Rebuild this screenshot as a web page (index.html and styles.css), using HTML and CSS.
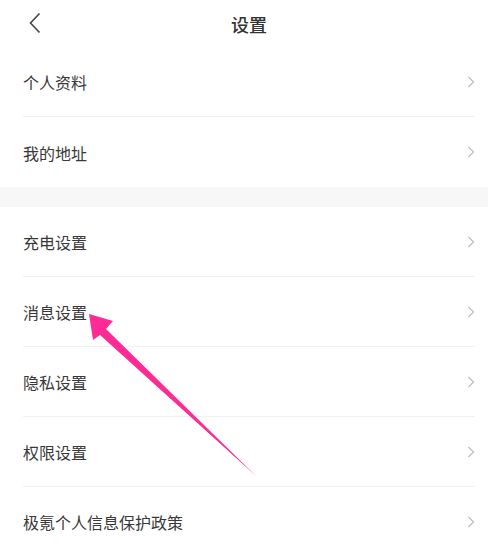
FILE: index.html
```html
<!DOCTYPE html>
<html lang="zh">
<head>
<meta charset="utf-8">
<link rel="stylesheet" href="styles.css">
</head>
<body>
<div class="page">
  <header class="header">
    <svg class="back" width="14" height="22" viewBox="0 0 14 22"><path d="M11.5 1.5 L2.5 11 L11.5 20.5" fill="none" stroke="#444" stroke-width="1.6"/></svg>
    <div class="title">设置</div>
  </header>
  <div class="group">
    <div class="row"><span>个人资料</span><svg class="chev" width="8" height="12" viewBox="0 0 8 12"><path d="M1.5 1 L6.5 6 L1.5 11" fill="none" stroke="#bdbdbd" stroke-width="1.2"/></svg></div>
    <div class="row last"><span>我的地址</span><svg class="chev" width="8" height="12" viewBox="0 0 8 12"><path d="M1.5 1 L6.5 6 L1.5 11" fill="none" stroke="#bdbdbd" stroke-width="1.2"/></svg></div>
  </div>
  <div class="gap"></div>
  <div class="group">
    <div class="row"><span>充电设置</span><svg class="chev" width="8" height="12" viewBox="0 0 8 12"><path d="M1.5 1 L6.5 6 L1.5 11" fill="none" stroke="#bdbdbd" stroke-width="1.2"/></svg></div>
    <div class="row"><span>消息设置</span><svg class="chev" width="8" height="12" viewBox="0 0 8 12"><path d="M1.5 1 L6.5 6 L1.5 11" fill="none" stroke="#bdbdbd" stroke-width="1.2"/></svg></div>
    <div class="row"><span>隐私设置</span><svg class="chev" width="8" height="12" viewBox="0 0 8 12"><path d="M1.5 1 L6.5 6 L1.5 11" fill="none" stroke="#bdbdbd" stroke-width="1.2"/></svg></div>
    <div class="row"><span>权限设置</span><svg class="chev" width="8" height="12" viewBox="0 0 8 12"><path d="M1.5 1 L6.5 6 L1.5 11" fill="none" stroke="#bdbdbd" stroke-width="1.2"/></svg></div>
    <div class="row"><span>极氪个人信息保护政策</span><svg class="chev" width="8" height="12" viewBox="0 0 8 12"><path d="M1.5 1 L6.5 6 L1.5 11" fill="none" stroke="#bdbdbd" stroke-width="1.2"/></svg></div>
  </div>
  <svg class="arrow" width="488" height="548" viewBox="0 0 488 548">
    <polygon points="89,314 113,321 106,329 257,477 100,335 93,340" fill="#ff2b95"/>
  </svg>
</div>
</body>
</html>
```
FILE: styles.css
```css
* { box-sizing: border-box; }
html, body { margin: 0; padding: 0; background: #fff; }
.page {
  position: relative;
  width: 488px;
  height: 548px;
  overflow: hidden;
  font-family: "Noto Sans CJK SC", "Noto Sans", sans-serif;
  color: #333;
}
.header {
  position: relative;
  height: 47px;
  display: flex;
  align-items: center;
  justify-content: center;
}
.back { position: absolute; left: 28px; top: 12px; }
.title {
  font-size: 18px;
  font-weight: 500;
  color: #333;
  margin-top: 0;
  margin-left: 10px;
}
.group { padding: 0 13px 0 23px; }
.row {
  height: 70px;
  display: flex;
  align-items: center;
  justify-content: space-between;
  border-bottom: 1px solid #f1f1f1;
  font-size: 16px;
  color: #383838;
}
.row span { margin-top: 1px; }
.row.last { border-bottom: none; height: 70px; }
.gap { height: 20px; background: #f7f7f7; }
.arrow { position: absolute; left: 0; top: 0; pointer-events: none; }
```
